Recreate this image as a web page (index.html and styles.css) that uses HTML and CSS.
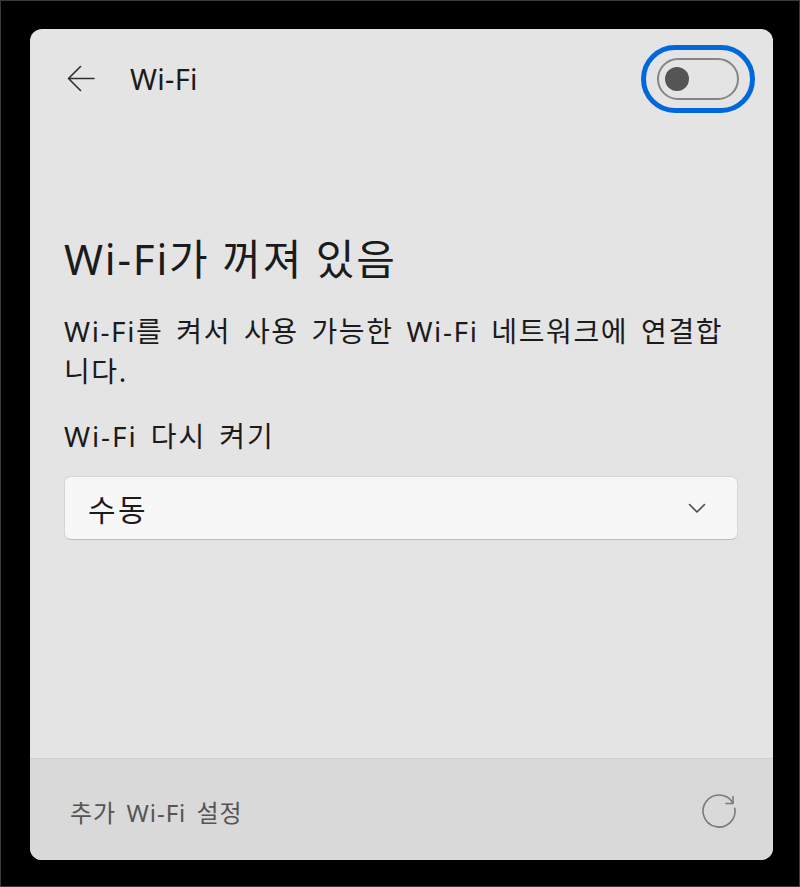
FILE: index.html
```html
<!DOCTYPE html>
<html lang="ko">
<head>
  <meta charset="UTF-8" />
  <meta name="viewport" content="width=device-width, initial-scale=1.0" />
  <title>Wi-Fi</title>
  <link rel="stylesheet" href="styles.css">
</head>
<body>
  <div class="panel">
    <div class="header">
      <button class="back" aria-label="뒤로">
        <svg width="28" height="28" viewBox="0 0 28 28">
          <path d="M27 13.5H2 M13.5 1.5 1.5 13.5 13.5 25.5" fill="none" stroke="#303030" stroke-width="1.6" stroke-linecap="round" stroke-linejoin="round"/>
        </svg>
      </button>
      <span class="title">Wi-Fi</span>
      <div class="focus-ring">
        <div class="toggle"><span class="knob"></span></div>
      </div>
    </div>

    <div class="content">
      <h1>Wi-Fi가 꺼져 있음</h1>
      <p class="desc">Wi-Fi를 켜서 사용 가능한 Wi-Fi 네트워크에 연결합니다.</p>
      <div class="label">Wi-Fi 다시 켜기</div>
      <div class="select">
        <span>수동</span>
        <svg width="18" height="11" viewBox="0 0 18 11">
          <path d="M1.5 1.5 9 9 16.5 1.5" fill="none" stroke="#4a4a4a" stroke-width="1.6" stroke-linecap="round" stroke-linejoin="round"/>
        </svg>
      </div>
    </div>

    <div class="footer">
      <span>추가 Wi-Fi 설정</span>
      <svg width="40" height="40" viewBox="0 0 40 40">
        <path d="M35.8 17.2A16 16 0 1 1 33.9 12" fill="none" stroke="#7a7a7a" stroke-width="1.6" stroke-linecap="round"/>
        <path d="M34 5.5V12.5H27" fill="none" stroke="#7a7a7a" stroke-width="1.6" stroke-linecap="round" stroke-linejoin="round"/>
      </svg>
    </div>
  </div>
</body>
</html>
```

FILE: styles.css
```css
html, body {
  height: 100%;
}
body {
  margin: 0;
  box-sizing: border-box;
  display: flex;
  padding: 28px 26px 26px 29px;
  background-color: #000;
  border: 1px solid #3a3a3a;
  font-family: "Noto Sans", "Noto Sans CJK KR", sans-serif;
  color: #1b1b1b;
}
.panel {
  flex: 1;
  display: flex;
  flex-direction: column;
  background-color: #e4e4e4;
  border-radius: 12px;
  overflow: hidden;
}
.header {
  display: flex;
  align-items: center;
  padding: 16px 18px 0 37px;
}
.back {
  display: flex;
  padding: 0;
  border: none;
  background: none;
}
.title {
  margin-left: 35px;
  font-size: 29px;
  line-height: 40px;
  letter-spacing: 0.3px;
}
.focus-ring {
  margin-left: auto;
  padding: 8px 11px;
  border: 5px solid #0067dc;
  border-radius: 34px;
}
.toggle {
  box-sizing: border-box;
  width: 82px;
  height: 42px;
  display: flex;
  align-items: center;
  padding-left: 6px;
  border: 2px solid #858585;
  border-radius: 21px;
}
.knob {
  width: 24px;
  height: 24px;
  border-radius: 50%;
  background-color: #555;
}
.content {
  flex: 1;
  padding: 118px 35px 0 34px;
}
h1 {
  margin: 0;
  font-size: 42px;
  font-weight: 400;
  line-height: 56px;
  letter-spacing: 1.8px;
}
.desc {
  margin: 24px 0 0;
  font-size: 28px;
  line-height: 40px;
  letter-spacing: 1.6px;
  word-spacing: 4px;
}
.label {
  margin-top: 25px;
  font-size: 28px;
  line-height: 40px;
  letter-spacing: 1.9px;
  word-spacing: 4px;
}
.select {
  margin-top: 20px;
  height: 64px;
  box-sizing: border-box;
  display: flex;
  align-items: center;
  justify-content: space-between;
  padding: 0 31px 0 23px;
  background-color: #f7f7f7;
  border: 1px solid #d5d5d5;
  border-bottom-color: #bdbdbd;
  border-radius: 7px;
  font-size: 30px;
  letter-spacing: 2.5px;
}
.footer {
  height: 98px;
  display: flex;
  align-items: center;
  justify-content: space-between;
  padding: 3px 34px 0 40px;
  background-color: #d9d9d9;
  border-top: 1px solid #cfcfcf;
  font-size: 24px;
  color: #555;
  letter-spacing: 1px;
  word-spacing: 3px;
}
```
